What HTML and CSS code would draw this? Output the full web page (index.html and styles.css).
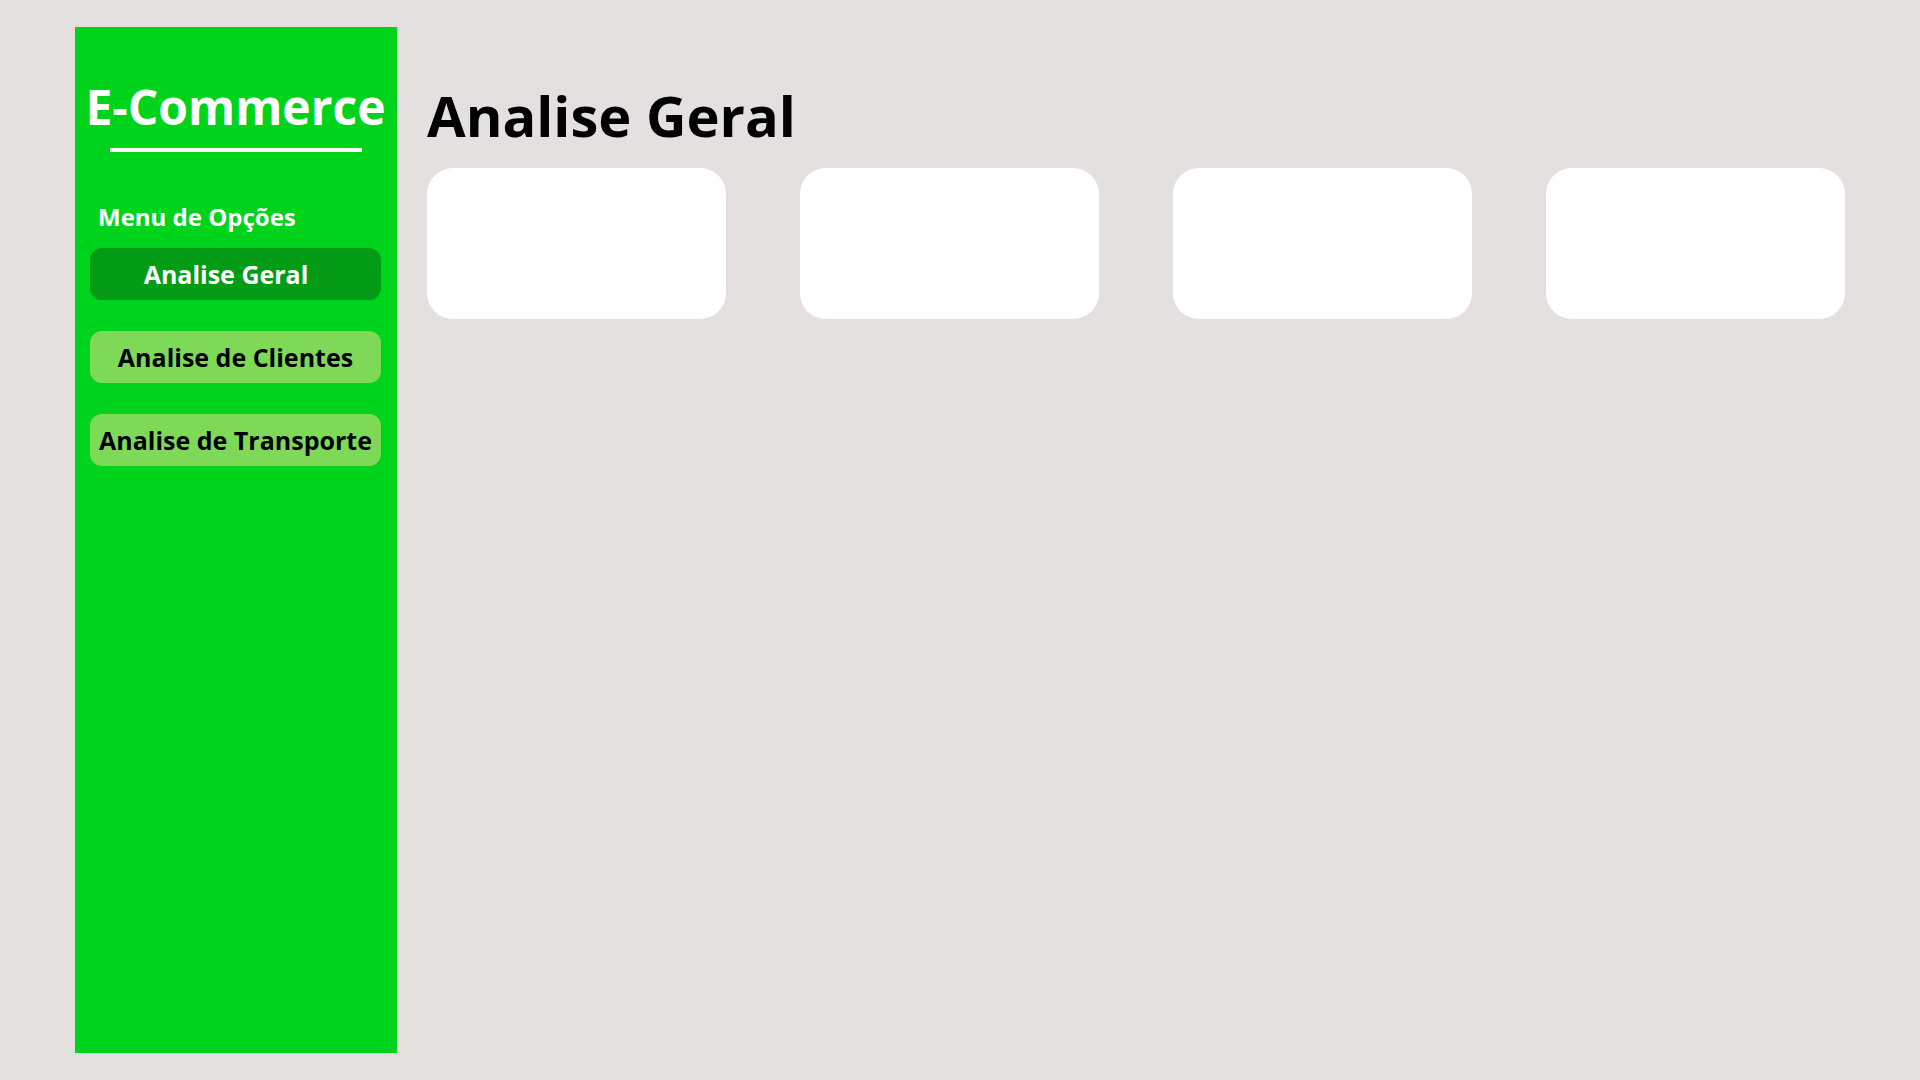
FILE: index.html
```html
<!DOCTYPE html>
<html lang="pt-BR">
<head>
<meta charset="utf-8">
<title>E-Commerce</title>
<link rel="stylesheet" href="styles.css">
</head>
<body>
<div class="page">
  <aside class="sidebar">
    <h1 class="brand">E-Commerce</h1>
    <div class="brand-rule"></div>
    <p class="menu-label">Menu de Opções</p>
    <nav class="menu">
      <a class="menu-item active">Analise Geral</a>
      <a class="menu-item">Analise de Clientes</a>
      <a class="menu-item">Analise de Transporte</a>
    </nav>
  </aside>
  <main class="content">
    <h2 class="page-title">Analise Geral</h2>
    <div class="cards">
      <div class="card"></div>
      <div class="card"></div>
      <div class="card"></div>
      <div class="card"></div>
    </div>
  </main>
</div>
</body>
</html>
```

FILE: styles.css
```css
* { box-sizing: border-box; }
html, body { margin: 0; padding: 0; }
body {
  background: #e3e0df;
  font-family: "Open Sans", "Noto Sans", sans-serif;
  width: 1920px;
  height: 1080px;
  overflow: hidden;
}
.page {
  display: flex;
  padding: 27px 75px;
  gap: 30px;
  height: 1080px;
}
.sidebar {
  width: 322px;
  flex: 0 0 322px;
  height: 1026px;
  background: #00d31c;
  display: flex;
  flex-direction: column;
  align-items: center;
  padding: 46px 16px 0 15px;
}
.brand {
  margin: 0;
  font-size: 48px;
  font-weight: 700;
  color: #ffffff;
  line-height: 68px;
  white-space: nowrap;
}
.brand-rule {
  width: 252px;
  height: 4px;
  background: #ffffff;
  margin-top: 7px;
}
.menu-label {
  align-self: flex-start;
  margin: 48px 0 0 8px;
  font-size: 24px;
  line-height: 34px;
  font-weight: 700;
  color: #ffffff;
}
.menu {
  align-self: stretch;
  display: flex;
  flex-direction: column;
  gap: 31px;
  margin-top: 14px;
}
.menu-item {
  display: flex;
  align-items: center;
  justify-content: center;
  height: 52px;
  border-radius: 12px;
  background: #7ed957;
  color: #000000;
  font-size: 25px;
  font-weight: 700;
  white-space: nowrap;
}
.menu-item.active {
  background: #049b17;
  color: #ffffff;
  padding-right: 19px;
}
.content {
  flex: 1;
  display: flex;
  flex-direction: column;
}
.page-title {
  margin: 49px 0 14px 0;
  font-size: 56px;
  line-height: 78px;
  font-weight: 700;
  color: #000000;
}
.cards {
  display: grid;
  grid-template-columns: repeat(4, 1fr);
  gap: 74px;
}
.card {
  height: 151px;
  background: #ffffff;
  border-radius: 26px;
}
```
